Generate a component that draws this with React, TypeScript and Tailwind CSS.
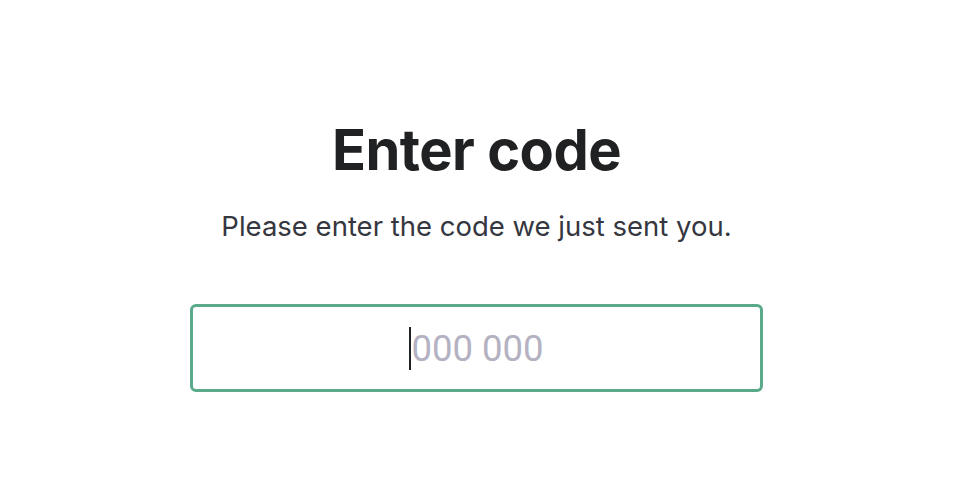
export default function App() {
  return (
    <div className="min-h-screen bg-white flex justify-center pr-[6px] font-['Inter',sans-serif]">
      <div className="w-[573px] flex flex-col items-center pt-[112px]">
        <h1 className="text-[56px] leading-[76px] font-bold text-[#202123] tracking-[-0.5px]">Enter code</h1>
        <p className="mt-[20px] text-[27.5px] leading-[36px] text-[#353740]">
          Please enter the code we just sent you.
        </p>
        {/* code field */}
        <div className="mt-[60px] w-full h-[88px] rounded-[6px] border-[3px] border-[#59a98a] flex items-center justify-center">
          <span className="w-[2px] h-[43px] mt-[1px] bg-[#202123]" />
          <span className="mt-[2px] text-[36.5px] text-[#b4b2c2] font-['Roboto',sans-serif]">000 000</span>
        </div>
      </div>
    </div>
  );
}
